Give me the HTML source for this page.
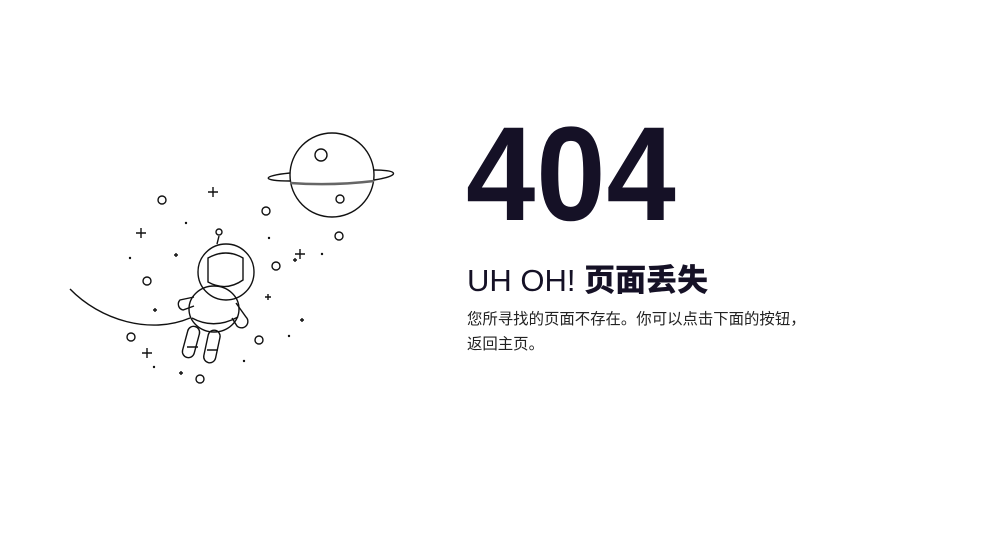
<!DOCTYPE html>
<html><head><meta charset="utf-8"><style>
body{margin:0;width:991px;height:548px;background:#fff;overflow:hidden;position:relative;font-family:"Liberation Sans","Noto Sans CJK SC",sans-serif;color:#151126}
.n{position:absolute;left:466px;top:100px;font-size:134px;font-weight:bold;letter-spacing:1px;line-height:150px;transform:scaleX(0.93);transform-origin:left}
.h{position:absolute;left:467px;top:258px;font-size:31px;line-height:40px;white-space:nowrap}
.h b{font-family:"Noto Sans CJK SC",sans-serif;font-weight:900}
.p{position:absolute;left:467px;top:306px;font-size:15.4px;line-height:25px;color:#222;width:345px;font-family:"Noto Sans CJK SC",sans-serif}
</style></head><body>
<svg width="991" height="548" style="position:absolute;left:0;top:0" fill="none" stroke="#111" stroke-width="1.4">
<circle cx="332" cy="175" r="42"/>
<path d="M290 173 C260 176 262 181 290 181 M374 170 C400 170 400 176 374 180"/>
<path d="M290 183 Q332 186 374 181" stroke="#666" stroke-width="2.5"/>
<circle cx="321" cy="155" r="6"/><circle cx="340" cy="199" r="4"/>
<circle cx="339" cy="236" r="4"/><circle cx="266" cy="211" r="4"/><circle cx="162" cy="200" r="4"/>
<circle cx="276" cy="266" r="4"/><circle cx="147" cy="281" r="4"/><circle cx="131" cy="337" r="4"/>
<circle cx="259" cy="340" r="4"/><circle cx="200" cy="379" r="4"/>
<path d="M213 187v10M208 192h10M141 228v10M136 233h10M300 249v10M295 254h10M147 348v10M142 353h10M176 253v4M174 255h4M268 294v6M265 297h6M155 308v4M153 310h4M181 371v4M179 373h4M302 318v4M300 320h4M295 258v4M293 260h4"/>
<g fill="#111" stroke="none"><circle cx="186" cy="223" r="1.2"/><circle cx="130" cy="258" r="1.2"/><circle cx="269" cy="238" r="1.2"/><circle cx="322" cy="254" r="1.2"/><circle cx="289" cy="336" r="1.2"/><circle cx="244" cy="361" r="1.2"/><circle cx="154" cy="367" r="1.2"/></g>
<path d="M70 289 C100 320 150 335 190 318"/>
<line x1="219" y1="236" x2="217" y2="244"/><circle cx="219" cy="232" r="3"/>
<circle cx="226" cy="272" r="28"/>
<path d="M208 258 Q226 248 243 258 L243 280 Q226 292 208 282 Z"/>
<ellipse cx="214" cy="309" rx="25" ry="23"/>
<path d="M192 318 Q214 330 238 317"/>
<path d="M194 297 L180 300 A6 6 0 0 0 183 310 L194 306"/>
<path d="M236 303 L246 317 A6 6 0 0 1 237 326 L232 318"/>
<rect x="185" y="326" width="12" height="32" rx="6" transform="rotate(15 191 342)"/>
<rect x="206" y="330" width="12" height="33" rx="6" transform="rotate(12 212 346)"/>
<path d="M187 347 h11 M207 350 h11"/>
</svg>
<div class="n">404</div>
<div class="h">UH OH! <b>页面丢失</b></div>
<div class="p">您所寻找的页面不存在。你可以点击下面的按钮，返回主页。</div>
</body></html>
